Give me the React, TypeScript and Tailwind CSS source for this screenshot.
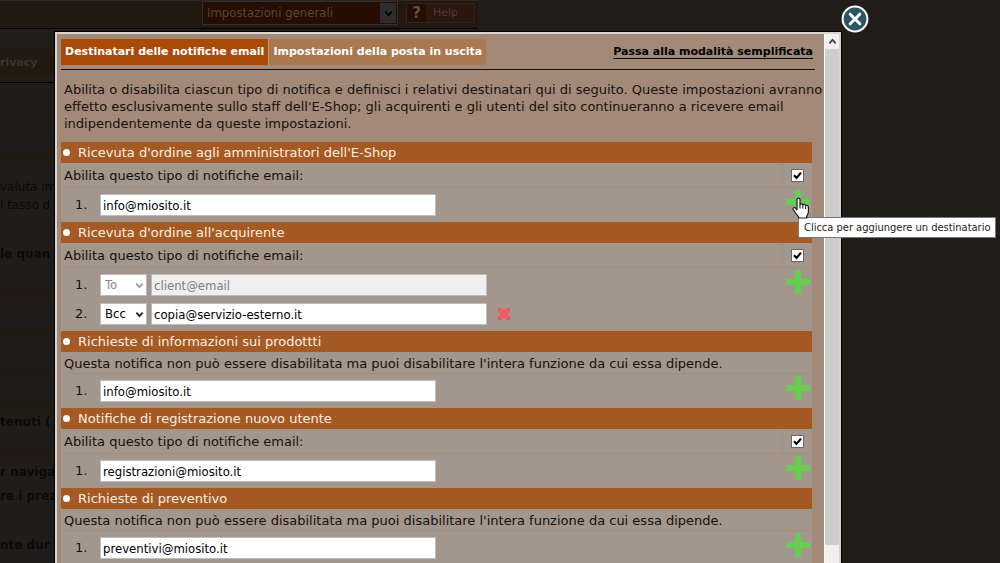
import React from "react";

type Recipient = {
  value: string;
  kind?: "To" | "Bcc";
  disabled?: boolean;
  removable?: boolean;
};

type Notification = {
  id: string;
  title: string;
  locked?: boolean;
  recipients: Recipient[];
};

const notifications: Notification[] = [
  {
    id: "admin-receipt",
    title: "Ricevuta d'ordine agli amministratori dell'E-Shop",
    recipients: [{ value: "info@miosito.it" }],
  },
  {
    id: "buyer-receipt",
    title: "Ricevuta d'ordine all'acquirente",
    recipients: [
      { value: "client@email", kind: "To", disabled: true },
      { value: "copia@servizio-esterno.it", kind: "Bcc", removable: true },
    ],
  },
  {
    id: "product-info",
    title: "Richieste di informazioni sui prodottti",
    locked: true,
    recipients: [{ value: "info@miosito.it" }],
  },
  {
    id: "new-user",
    title: "Notifiche di registrazione nuovo utente",
    recipients: [{ value: "registrazioni@miosito.it" }],
  },
  {
    id: "quote",
    title: "Richieste di preventivo",
    locked: true,
    recipients: [{ value: "preventivi@miosito.it" }],
  },
];

function Chevron({ className }: { className: string }) {
  return (
    <svg viewBox="0 0 10 10" className={className} fill="none" stroke="currentColor" strokeWidth="2" aria-hidden="true">
      <path d="M1.5 3 L5 6.8 L8.5 3" />
    </svg>
  );
}

function PlusIcon() {
  return (
    <svg viewBox="0 0 24 24" className="size-6" aria-hidden="true">
      <path d="M9 0h6v9h9v6h-9v9H9v-9H0V9h9z" fill="#62cf4f" />
    </svg>
  );
}

function RemoveIcon() {
  return (
    <svg viewBox="0 0 14 14" className="size-[14px]" aria-hidden="true">
      <path d="M3 3 L11 11 M11 3 L3 11" stroke="#e8434b" strokeWidth="4" strokeLinecap="round" />
      <path d="M3 3 L11 11 M11 3 L3 11" stroke="#fa5a60" strokeWidth="3" strokeLinecap="round" />
    </svg>
  );
}

function HandCursor() {
  return (
    <svg viewBox="0 0 18 22" className="h-[22px] w-[18px]" aria-hidden="true">
      <path
        d="M5 13 V2.6 C5 0.5 8 0.5 8 2.6 V8 C8.2 6.4 10.8 6.6 10.8 8.2 C11.2 7 13.6 7.2 13.6 8.9 C14.2 8 16.4 8.3 16.4 10.2 V14.5 C16.4 17 15.2 18 14.8 19.2 V21 H6.6 V19.6 C5 18 2.4 15 1.2 12.6 C0.4 10.8 2.4 9.8 3.6 11.2 Z"
        fill="#fff"
        stroke="#1c1c28"
        strokeWidth="1.2"
        strokeLinejoin="round"
      />
      <path d="M8 8v3.4M10.8 8.6v3M13.6 9.4v2.6" stroke="#1c1c28" strokeWidth="1.1" />
    </svg>
  );
}

function RecipientRow({ item, index, id }: { item: Recipient; index: number; id: string }) {
  return (
    <li className="flex h-[22px] items-center">
      <label htmlFor={id} className="w-[39px] pl-[14px]">
        {index + 1}.
      </label>
      {item.kind && (
        <span className="relative mr-1 h-[22px] w-[47px]">
          <select
            aria-label="Tipo di destinatario"
            disabled={item.disabled}
            defaultValue={item.kind}
            className="size-full appearance-none border border-[#b9bcc2] bg-white pl-1 font-['DejaVu_Sans_Condensed','DejaVu_Sans',sans-serif] text-[13px] text-black opacity-100 disabled:text-[#858585]"
          >
            <option>To</option>
            <option>Bcc</option>
          </select>
          <Chevron
            className={
              item.disabled
                ? "pointer-events-none absolute top-[7px] right-[3px] size-[9px] text-[#9a9a9a]"
                : "pointer-events-none absolute top-[7px] right-[3px] size-[9px] text-[#222]"
            }
          />
        </span>
      )}
      <input
        id={id}
        type="text"
        defaultValue={item.value}
        disabled={item.disabled}
        className="h-[22px] w-[336px] border border-[#b9bcc2] bg-white px-[2px] font-['DejaVu_Sans_Condensed','DejaVu_Sans',sans-serif] text-[13px] text-black disabled:bg-[#efefef] disabled:text-[#7d7d7d]"
      />
      {item.removable && (
        <button type="button" aria-label="Rimuovi destinatario" className="ml-[10px]">
          <RemoveIcon />
        </button>
      )}
    </li>
  );
}

function NotificationBlock({ item, hovered }: { item: Notification; hovered: boolean }) {
  return (
    <section className="bg-[#a3968c]">
      <h2 className="flex h-[21px] items-center gap-2 bg-[#a65a23] pl-[2px] leading-[23px] text-[#fdeee2]">
        <span className="size-[7px] rounded-full bg-white" />
        {item.title}
      </h2>
      {item.locked ? (
        <p className="h-[22px] border-b border-[#a58d7b] pl-[3px] leading-[23px]">
          Questa notifica non può essere disabilitata ma puoi disabilitare l'intera funzione da cui essa dipende.
        </p>
      ) : (
        <div className="flex h-[25px] border-b border-[#a58d7b]">
          <label htmlFor={item.id} className="flex-1 border-r border-[#a58d7b] pl-[3px] leading-[25px]">
            Abilita questo tipo di notifiche email:
          </label>
          <span className="grid w-[29px] place-items-center">
            <input
              id={item.id}
              type="checkbox"
              defaultChecked
              className="col-start-1 row-start-1 size-[13px] appearance-none border border-[#70695f] bg-white"
            />
            <svg viewBox="0 0 13 13" className="pointer-events-none col-start-1 row-start-1 size-[13px]" aria-hidden="true">
              <path d="M3 6.2 L5.5 9 L10 3.6" fill="none" stroke="#000" strokeWidth="2.1" />
            </svg>
          </span>
        </div>
      )}
      <div className="flex">
        <ol className="flex flex-1 flex-col gap-[7px] py-[6px]">
          {item.recipients.map((r, i) => (
            <RecipientRow key={r.value} item={r} index={i} id={`${item.id}-${i}`} />
          ))}
        </ol>
        <div className="relative flex w-[29px] justify-center pt-[2px]">
          <button type="button" aria-label="Aggiungi destinatario" className="size-6">
            <PlusIcon />
          </button>
          {hovered && (
            <>
              <div
                role="tooltip"
                className="absolute top-[29px] left-[15px] z-10 h-[21px] border border-[#767676] bg-white px-[5px] font-['DejaVu_Sans_Condensed','DejaVu_Sans',sans-serif] text-[11px] leading-[19px] whitespace-nowrap text-[#1c1c1c]"
              >
                Clicca per aggiungere un destinatario
              </div>
              <div className="pointer-events-none absolute top-[9px] left-[9px] z-20">
                <HandCursor />
              </div>
            </>
          )}
        </div>
      </div>
    </section>
  );
}

function DimmedPage() {
  return (
    <div className="text-[12px] text-[#0b0908]">
      <header className="h-[29px] w-[478px] border-t border-b border-t-[#2c2621] border-b-black bg-[#23180f] pl-[202px]">
        <div className="flex gap-2">
          <div className="relative h-[24px] w-[196px]">
            <select
              aria-label="Sezione"
              className="size-full appearance-none border border-[#2f3033] bg-[#250d01] pl-1 font-['DejaVu_Sans_Condensed','DejaVu_Sans',sans-serif] text-[13px] text-[#554740]"
            >
              <option>Impostazioni generali</option>
            </select>
            <span className="pointer-events-none absolute top-[2px] right-[2px] grid h-5 w-4 place-items-center bg-[#2d2d2d]">
              <Chevron className="size-[9px] text-black" />
            </span>
          </div>
          <button
            type="button"
            className="mt-[2px] flex h-[20px] w-[69px] items-center border border-[#33221a] bg-[#2a170e] text-[11px] leading-[18px] text-[#4d3e37]"
          >
            <span className="mr-[7px] h-full w-[19px] bg-[#250d01] text-center text-[15px] font-bold text-[#5b5552]">?</span>
            Help
          </button>
        </div>
      </header>
      <div className="mt-[20px] flex h-[34px] w-[55px] items-start gap-px border-b border-black text-[11px] font-bold text-[#3b3530]">
        <span className="h-[27px] w-[45px] bg-[#221910] leading-[27px]">rivacy</span>
        <span className="h-[27px] flex-1 bg-[#221910]" />
      </div>
      <div className="w-[55px] bg-[#1f1d1b] pt-8 whitespace-nowrap">
        <div className="h-3 bg-[#211b16]" />
        <div className="mt-[22px] h-[13px] bg-[#211b16]" />
        <p className="mt-4 h-[18px] leading-[18px]">valuta im</p>
        <p className="h-[18px] leading-[18px]">l tasso d</p>
        <p className="mt-[31px] h-[18px] leading-[18px] font-bold">le quan</p>
        <div className="mt-[20px] h-5 bg-[#211b16]" />
        <div className="mt-[22px] h-[14px] bg-[#211b16]" />
        <div className="mt-[27px] h-3 bg-[#211b16]" />
        <div className="mt-[20px] h-[15px] bg-[#211b16]" />
        <p className="h-[18px] leading-[18px] font-bold">tenuti (</p>
        <div className="mt-4 h-4 bg-[#211b16]" />
        <p className="h-[18px] leading-[18px] font-bold">r naviga</p>
        <p className="mt-[6px] h-[18px] leading-[18px] font-bold">re i prez</p>
        <p className="mt-[31px] h-[27px] leading-[18px] font-bold">nte dur</p>
      </div>
    </div>
  );
}

export default function App() {
  return (
    <div className="relative h-screen overflow-hidden bg-[#211d19] font-['DejaVu_Sans',sans-serif]">
      <DimmedPage />
      <div className="absolute top-8 right-[159px] bottom-0 left-[55px]">
        <div
          role="dialog"
          aria-label="Notifiche email"
          className="flex h-full border-2 border-b-0 border-[#d9d4cf] bg-[#a38a78] outline outline-black"
        >
          <main className="min-w-0 flex-1 pt-[5px] pl-1 text-[13px] text-[#17110d]">
            <nav className="mr-[9px] flex h-[31px] items-start border-b border-[#17110d] text-[11px] font-bold">
              <button type="button" className="h-[26px] border-r border-[#b89c88] bg-[#a94b08] px-1 text-white">
                Destinatari delle notifiche email
              </button>
              <button type="button" className="h-[26px] bg-[#a97750] px-1 text-white">
                Impostazioni della posta in uscita
              </button>
              <a href="#semplificata" className="mt-[5px] mr-[2px] ml-auto leading-[16px] text-black underline underline-offset-[3px]">
                Passa alla modalità semplificata
              </a>
            </nav>
            <p className="mt-[11px] h-[61px] pl-[3px] leading-[17px]">
              Abilita o disabilita ciascun tipo di notifica e definisci i relativi destinatari qui di seguito. Queste
              impostazioni avranno effetto esclusivamente sullo staff dell'E-Shop; gli acquirenti e gli utenti del sito
              continueranno a ricevere email
              <br />
              indipendentemente da queste impostazioni.
            </p>
            <div className="mr-3">
              {notifications.map((n, i) => (
                <NotificationBlock key={n.id} item={n} hovered={i === 0} />
              ))}
            </div>
          </main>
          <div className="flex w-[15px] flex-col border-l border-white bg-[#f0f0f0]" aria-hidden="true">
            <div className="grid h-[15px] place-items-center">
              <svg viewBox="0 0 10 10" className="size-[9px]" fill="none" stroke="#444" strokeWidth="2">
                <path d="M1.5 7 L5 3.2 L8.5 7" />
              </svg>
            </div>
            <div className="flex-1 bg-[#cdcdcd]" />
            <div className="h-[18px]" />
          </div>
        </div>
        <button type="button" aria-label="Chiudi" className="absolute top-[-27px] right-[-28px] size-[28px]">
          <svg viewBox="0 0 28 28" className="size-full" aria-hidden="true">
            <circle cx="14" cy="14" r="12.4" fill="#2b5661" stroke="#fff" strokeWidth="2" />
            <path d="M9.2 9.2 L18.8 18.8 M18.8 9.2 L9.2 18.8" stroke="#fff" strokeWidth="3" strokeLinecap="round" />
          </svg>
        </button>
      </div>
    </div>
  );
}
